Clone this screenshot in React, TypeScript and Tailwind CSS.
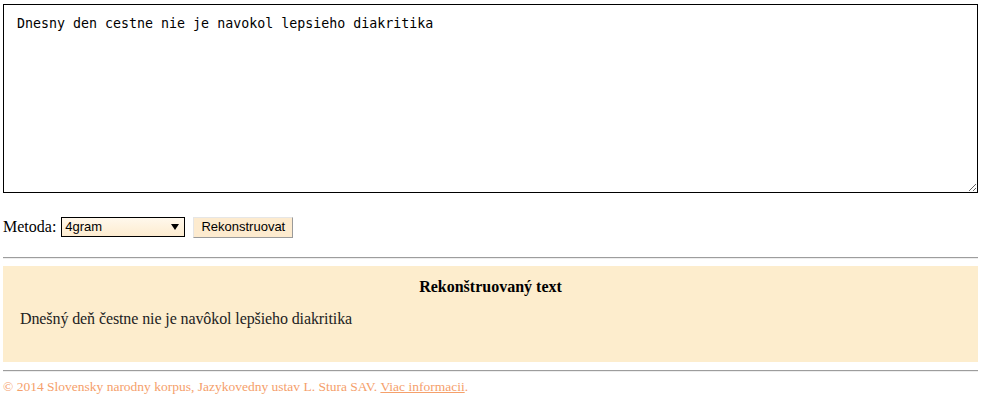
import { useState } from 'react';

export default function App() {
  const [text, setText] = useState('Dnesny den cestne nie je navokol lepsieho diakritika');
  const [method, setMethod] = useState('4gram');

  return (
    <div className="bg-white px-[3px] pt-[4px] font-['Liberation_Serif',serif] text-black">
      {/* Input */}
      <textarea
        value={text}
        onChange={(e) => setText(e.target.value)}
        spellCheck
        className="block h-[189px] w-full resize-y border border-black bg-white px-[13px] pt-[11px] font-['DejaVu_Sans_Mono',monospace] text-[13.3px] leading-[16px] outline-none"
      />

      {/* Controls */}
      <div className="mt-[22px] flex items-center text-[16px]">
        <span>Metoda:</span>
        <select
          value={method}
          onChange={(e) => setMethod(e.target.value)}
          className="ml-[5px] h-[20px] w-[124px] appearance-none border border-black pl-[3px] font-['Liberation_Sans',sans-serif] text-[13px] leading-[18px]"
          style={{
            backgroundImage:
              "url(\"data:image/svg+xml;utf8,<svg xmlns='http://www.w3.org/2000/svg' width='8' height='8'><path d='M0 1h8L4 7z' fill='black'/></svg>\"), linear-gradient(#fff8ec,#fdecd0)",
            backgroundRepeat: 'no-repeat, no-repeat',
            backgroundPosition: 'right 5px center, 0 0',
          }}
        >
          <option>4gram</option>
          <option>3gram</option>
          <option>2gram</option>
        </select>
        <button className="ml-[8px] h-[21px] w-[100px] border border-t-[#e6e6e6] border-l-[#e6e6e6] border-r-[#9a9a9a] border-b-[#9a9a9a] bg-[#fdebcf] font-['Liberation_Sans',sans-serif] text-[13px] leading-[18px]">
          Rekonstruovat
        </button>
      </div>

      <div className="mt-[18px] border-t border-t-[#9d9d9d] border-b border-b-[#eeeeee]" />

      {/* Result */}
      <div className="mt-[7px] h-[96px] bg-[#fdedcd] px-[17px] pt-[11px]">
        <h3 className="text-center text-[16px] leading-[20px] font-bold">Rekonštruovaný text</h3>
        <p className="mt-[12px] text-[16px] leading-[20px] tracking-[-0.1px] text-[#222]">
          Dnešný deň čestne nie je navôkol lepšieho diakritika
        </p>
      </div>

      <div className="mt-[8px] border-t border-t-[#9d9d9d] border-b border-b-[#eeeeee]" />

      {/* Footer */}
      <p className="mt-[7px] text-[13.5px] leading-[16px] text-[#f5a06b]">
        © 2014 Slovensky narodny korpus, Jazykovedny ustav L. Stura SAV.{' '}
        <a href="#" className="underline">Viac informacii</a>.
      </p>
    </div>
  );
}
